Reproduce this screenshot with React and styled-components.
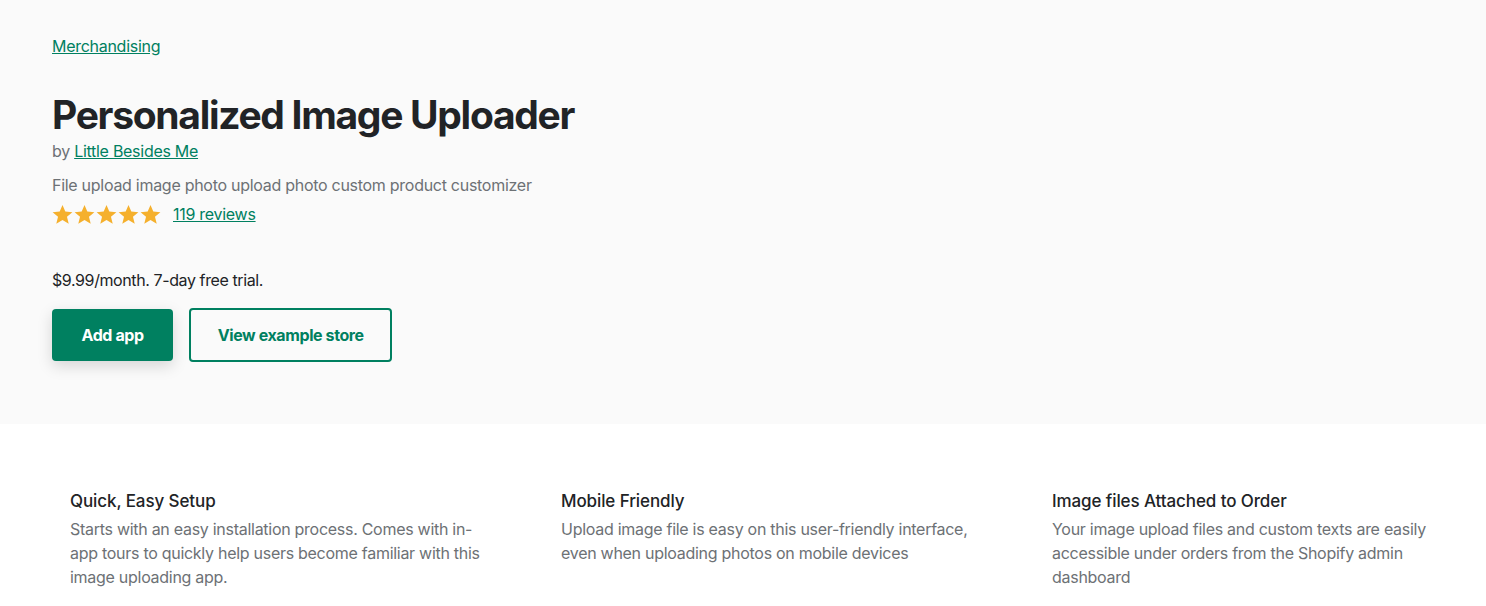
import React from "react";
import styled, { createGlobalStyle } from "styled-components";

const GlobalStyle = createGlobalStyle`
  html, body {
    margin: 0;
    padding: 0;
    background: #ffffff;
    font-family: Inter, "Noto Sans", Arial, sans-serif;
    letter-spacing: -0.28px;
    color: #212326;
  }
`;

const Hero = styled.section`
  background: #fafafa;
  padding: 34px 52px 62px;
`;

const Crumb = styled.a`
  display: block;
  font-size: 16px;
  line-height: 24px;
  color: #008060;
  text-decoration: underline;
  width: fit-content;
`;

const Title = styled.h1`
  margin: 33px 0 0;
  font-size: 39px;
  line-height: 48px;
  font-weight: 700;
  letter-spacing: -1.3px;
  color: #212326;
`;

const Byline = styled.div`
  font-size: 16px;
  line-height: 24px;
  color: #6d7175;
`;

const Link = styled.a`
  color: #008060;
  text-decoration: underline;
`;

const Tagline = styled.p`
  margin: 10px 0 0;
  font-size: 16px;
  line-height: 24px;
  color: #6d7175;
`;

const RatingRow = styled.div`
  margin-top: 5px;
  display: flex;
  align-items: center;
  gap: 12px;
  height: 24px;
`;

const Stars = styled.div`
  display: flex;
  gap: 1px;
`;

const Price = styled.p`
  margin: 42px 0 0;
  font-size: 16px;
  line-height: 24px;
  letter-spacing: -0.4px;
  color: #212326;
`;

const Actions = styled.div`
  margin-top: 16px;
  display: flex;
  align-items: center;
  gap: 16px;
`;

const Button = styled.button`
  font-family: inherit;
  font-size: 16px;
  font-weight: 700;
  letter-spacing: -0.4px;
  border-radius: 4px;
  cursor: pointer;
  height: ${(p) => (p.$primary ? "52px" : "54px")};
  padding: 0 ${(p) => (p.$primary ? "29.5px" : "26.5px")};
  border: ${(p) => (p.$primary ? "none" : "2px solid #008060")};
  background: ${(p) => (p.$primary ? "#008060" : "transparent")};
  color: ${(p) => (p.$primary ? "#ffffff" : "#008060")};
  box-shadow: ${(p) =>
    p.$primary ? "0 5px 15px rgba(0, 0, 0, 0.15)" : "none"};
`;

const Features = styled.section`
  display: grid;
  grid-template-columns: repeat(3, 491px);
  padding: 65px 0 0 70px;
`;

const Feature = styled.div`
  max-width: 416px;
`;

const FeatureTitle = styled.h3`
  margin: 0;
  font-size: 17px;
  line-height: 24px;
  font-weight: 500;
  letter-spacing: -0.1px;
  color: #212326;
`;

const FeatureText = styled.p`
  margin: 4px 0 0;
  font-size: 16px;
  line-height: 24px;
  color: #6d7175;
`;

const Star = () => (
  <svg width="21" height="21" viewBox="0 0 24 24">
    <path
      fill="#f5b02d"
      d="M12 1.2l3.2 7.5 8.1.6-6.2 5.3 2 7.9L12 18.3l-7.1 4.2 2-7.9L.7 9.3l8.1-.6z"
    />
  </svg>
);

const features = [
  {
    title: "Quick, Easy Setup",
    text: "Starts with an easy installation process. Comes with in-app tours to quickly help users become familiar with this image uploading app.",
  },
  {
    title: "Mobile Friendly",
    text: "Upload image file is easy on this user-friendly interface, even when uploading photos on mobile devices",
  },
  {
    title: "Image files Attached to Order",
    text: "Your image upload files and custom texts are easily accessible under orders from the Shopify admin dashboard",
  },
];

export default function App() {
  return (
    <>
      <GlobalStyle />
      <Hero>
        <Crumb href="#">Merchandising</Crumb>
        <Title>Personalized Image Uploader</Title>
        <Byline>
          by <Link href="#">Little Besides Me</Link>
        </Byline>
        <Tagline>
          File upload image photo upload photo custom product customizer
        </Tagline>
        <RatingRow>
          <Stars>
            {[0, 1, 2, 3, 4].map((i) => (
              <Star key={i} />
            ))}
          </Stars>
          <Link href="#">119 reviews</Link>
        </RatingRow>
        <Price>$9.99/month. 7-day free trial.</Price>
        <Actions>
          <Button $primary>Add app</Button>
          <Button>View example store</Button>
        </Actions>
      </Hero>
      <Features>
        {features.map((f) => (
          <Feature key={f.title}>
            <FeatureTitle>{f.title}</FeatureTitle>
            <FeatureText>{f.text}</FeatureText>
          </Feature>
        ))}
      </Features>
    </>
  );
}
